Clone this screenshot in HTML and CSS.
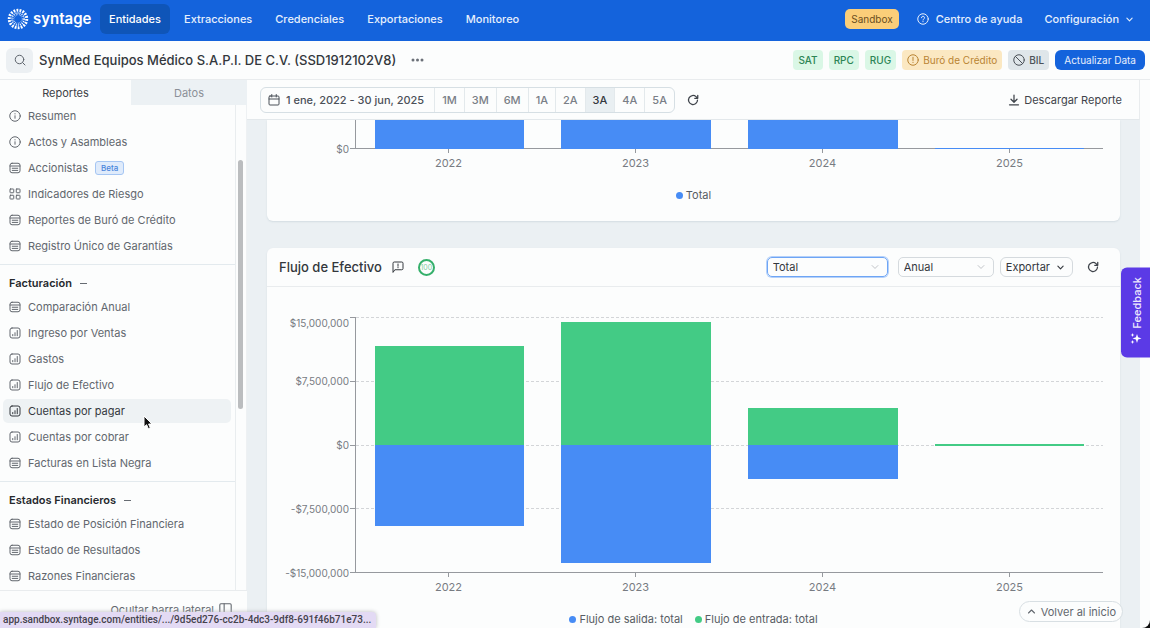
FILE: index.html
```html
<!DOCTYPE html>
<html lang="es">
<head>
<meta charset="utf-8">
<meta name="viewport" content="width=device-width, initial-scale=1">
<title>Syntage</title>
<link rel="stylesheet" href="styles.css">
</head>
<body>
<svg class="sprite" aria-hidden="true">
  <symbol id="i-info" viewBox="0 0 24 24"><circle cx="12" cy="12" r="10.5"/><path d="M12 11.5v5M12 7.3v.6"/></symbol>
  <symbol id="i-table" viewBox="0 0 24 24"><rect x="2" y="2.500" width="20" height="19" rx="4"/><path d="M2 8h20M6.500 12.500h11M6.500 16.800h11"/></symbol>
  <symbol id="i-grid" viewBox="0 0 24 24"><rect x="2" y="2" width="7.500" height="7.500" rx="1"/><rect x="14.500" y="2" width="7.500" height="7.500" rx="1"/><rect x="2" y="14.500" width="7.500" height="7.500" rx="1"/><rect x="14.500" y="14.500" width="7.500" height="7.500" rx="1"/></symbol>
  <symbol id="i-chart" viewBox="0 0 24 24"><rect x="2" y="2" width="20" height="20" rx="4"/><path d="M7.500 17.500v-2.500M12 17.500v-6M16.500 17.500V7"/></symbol>
  <symbol id="i-refresh" viewBox="0 0 24 24"><path d="M21 12a9 9 0 1 1-3-6.700L21 8M21.500 2.500V8.500H15.500"/></symbol>
  <symbol id="i-down" viewBox="0 0 24 24"><path d="M5 8.500l7 7 7-7"/></symbol>
</svg>

<header class="topbar">
  <a class="brand" href="#">
    <svg class="brand-mark" viewBox="0 0 44 44" aria-hidden="true">
      <circle class="rays-out" cx="22" cy="22" r="17.500" pathLength="180"/>
      <circle class="rays-mid" cx="22" cy="22" r="12.200" pathLength="180"/>
      <circle class="rays-in" cx="22" cy="22" r="8.800" pathLength="180"/>
    </svg>
    <span>syntage</span>
  </a>
  <nav class="mainnav">
    <a class="is-active" href="#">Entidades</a>
    <a href="#">Extracciones</a>
    <a href="#">Credenciales</a>
    <a href="#">Exportaciones</a>
    <a href="#">Monitoreo</a>
  </nav>
  <span class="env">Sandbox</span>
  <a class="help" href="#"><svg class="icon" viewBox="0 0 24 24"><circle cx="12" cy="12" r="10.500"/><path d="M9 9.500a3 3 0 1 1 4.300 2.700c-.9.500-1.300 1-1.300 1.900M12 17v.5"/></svg>Centro de ayuda</a>
  <button class="config" type="button">Configuración<svg class="icon tiny"><use href="#i-down"/></svg></button>
</header>

<section class="entity">
  <button class="search" type="button" aria-label="Buscar"><svg class="icon" viewBox="0 0 24 24"><circle cx="11" cy="11" r="8.500"/><path d="M17.300 17.300L22 22"/></svg></button>
  <h1>SynMed Equipos Médico S.A.P.I. DE C.V. (SSD1912102V8)</h1>
  <button class="more" type="button" aria-label="Más"><svg viewBox="0 0 13 4"><circle cx="2" cy="2" r="1.500"/><circle cx="6.500" cy="2" r="1.500"/><circle cx="11" cy="2" r="1.500"/></svg></button>
  <div class="status">
    <span class="tag ok">SAT</span>
    <span class="tag ok">RPC</span>
    <span class="tag ok">RUG</span>
    <span class="tag warn"><svg class="icon" viewBox="0 0 24 24"><circle cx="12" cy="12" r="10.500"/><path d="M12 6.500v6.500M12 16.500v.6"/></svg>Buró de Crédito</span>
    <span class="tag off"><svg class="icon" viewBox="0 0 24 24"><circle cx="12" cy="12" r="10.500"/><path d="M4.800 4.800l14.400 14.400"/></svg>BIL</span>
    <button class="update" type="button">Actualizar Data</button>
  </div>
</section>

<div class="layout">
  <aside class="sidebar">
    <div class="tabs">
      <button class="is-active" type="button">Reportes</button>
      <button type="button">Datos</button>
    </div>
    <div class="scroller">
      <nav class="menu">
        <section>
          <a href="#"><svg class="icon"><use href="#i-info"/></svg>Resumen</a>
          <a href="#"><svg class="icon"><use href="#i-info"/></svg>Actos y Asambleas</a>
          <a href="#"><svg class="icon"><use href="#i-table"/></svg>Accionistas <span class="beta">Beta</span></a>
          <a href="#"><svg class="icon"><use href="#i-grid"/></svg>Indicadores de Riesgo</a>
          <a href="#"><svg class="icon"><use href="#i-table"/></svg>Reportes de Buró de Crédito</a>
          <a href="#"><svg class="icon"><use href="#i-table"/></svg>Registro Único de Garantías</a>
        </section>
        <section>
          <h2>Facturación<i></i></h2>
          <a href="#"><svg class="icon"><use href="#i-table"/></svg>Comparación Anual</a>
          <a href="#"><svg class="icon"><use href="#i-chart"/></svg>Ingreso por Ventas</a>
          <a href="#"><svg class="icon"><use href="#i-chart"/></svg>Gastos</a>
          <a href="#"><svg class="icon"><use href="#i-chart"/></svg>Flujo de Efectivo</a>
          <a class="is-hover" href="#"><svg class="icon"><use href="#i-chart"/></svg>Cuentas por pagar</a>
          <a href="#"><svg class="icon"><use href="#i-chart"/></svg>Cuentas por cobrar</a>
          <a href="#"><svg class="icon"><use href="#i-table"/></svg>Facturas en Lista Negra</a>
        </section>
        <section>
          <h2>Estados Financieros<i></i></h2>
          <a href="#"><svg class="icon"><use href="#i-table"/></svg>Estado de Posición Financiera</a>
          <a href="#"><svg class="icon"><use href="#i-table"/></svg>Estado de Resultados</a>
          <a href="#"><svg class="icon"><use href="#i-table"/></svg>Razones Financieras</a>
        </section>
      </nav>
      <div class="track"><div class="thumb"></div></div>
    </div>
    <button class="collapse" type="button">Ocultar barra lateral<svg class="icon" viewBox="0 0 24 24"><rect x="1.500" y="1.500" width="21" height="21" rx="2"/><path d="M9.500 1.500v21"/></svg></button>
  </aside>

  <main class="main">
    <div class="toolbar">
      <div class="range">
        <button class="date" type="button"><svg class="icon" viewBox="0 0 24 24"><rect x="2" y="4" width="20" height="18" rx="2"/><path d="M2 10h20M7.500 1v5M16.500 1v5"/></svg>1 ene, 2022 - 30 jun, 2025</button>
        <button type="button">1M</button>
        <button type="button">3M</button>
        <button type="button">6M</button>
        <button type="button">1A</button>
        <button type="button">2A</button>
        <button class="is-active" type="button">3A</button>
        <button type="button">4A</button>
        <button type="button">5A</button>
      </div>
      <button class="plain" type="button" aria-label="Actualizar"><svg class="icon"><use href="#i-refresh"/></svg></button>
      <button class="plain download" type="button"><svg class="icon" viewBox="0 0 24 24"><path d="M12 2v14M6 10.500l6 6 6-6M3 21.500h18"/></svg>Descargar Reporte</button>
    </div>

    <div class="content">
      <article class="card card-cut">
        <div class="chart">
          <div class="y-labels"><span>$0</span></div>
          <div class="y-ticks"><i></i></div>
          <div class="plot">
            <div class="bars">
              <div class="col"><div class="up"><b class="out" style="height:100%"></b></div></div>
              <div class="col"><div class="up"><b class="out" style="height:100%"></b></div></div>
              <div class="col"><div class="up"><b class="out" style="height:100%"></b></div></div>
              <div class="col"><div class="up"><b class="out" style="height:3%"></b></div></div>
            </div>
          </div>
          <div class="x-labels"><span>2022</span><span>2023</span><span>2024</span><span>2025</span></div>
        </div>
        <div class="legend"><span class="key-out">Total</span></div>
      </article>

      <article class="card card-full">
        <header class="card-head">
          <h2>Flujo de Efectivo</h2>
          <svg class="icon note" viewBox="0 0 24 24"><path d="M2 22V4.500A2.500 2.500 0 0 1 4.500 2h15A2.500 2.500 0 0 1 22 4.500v10.500a2.500 2.500 0 0 1-2.500 2.500H6.500zM12 6v4.500M12 13v.6"/></svg>
          <span class="score">100</span>
          <div class="actions">
            <label class="select focus"><select aria-label="Tipo"><option>Total</option></select><svg class="icon"><use href="#i-down"/></svg></label>
            <label class="select short"><select aria-label="Periodo"><option>Anual</option></select><svg class="icon"><use href="#i-down"/></svg></label>
            <button class="export" type="button">Exportar<svg class="icon tiny"><use href="#i-down"/></svg></button>
            <button class="plain" type="button" aria-label="Actualizar"><svg class="icon"><use href="#i-refresh"/></svg></button>
          </div>
        </header>
        <div class="chart">
          <div class="y-labels"><span>$15,000,000</span><span>$7,500,000</span><span>$0</span><span>-$7,500,000</span><span>-$15,000,000</span></div>
          <div class="y-ticks"><i></i><i></i><i></i><i></i></div>
          <div class="plot">
            <div class="lines"><i></i><i></i><i></i><i></i></div>
            <div class="bars">
              <div class="col"><div class="up"><b class="in" style="height:77%"></b></div><div class="down"><b class="out" style="height:64%"></b></div></div>
              <div class="col"><div class="up"><b class="in" style="height:96%"></b></div><div class="down"><b class="out" style="height:93%"></b></div></div>
              <div class="col"><div class="up"><b class="in" style="height:29%"></b></div><div class="down"><b class="out" style="height:27%"></b></div></div>
              <div class="col"><div class="up"><b class="in" style="height:0%"></b></div><div class="down"><b class="in" style="height:0%"></b></div></div>
            </div>
          </div>
          <div class="x-labels"><span>2022</span><span>2023</span><span>2024</span><span>2025</span></div>
        </div>
        <div class="legend"><span class="key-out">Flujo de salida: total</span><span class="key-in">Flujo de entrada: total</span></div>
      </article>
    </div>
  </main>
</div>

<button class="feedback" type="button"><svg viewBox="0 0 24 24" aria-hidden="true"><path d="M10 3l2.200 6.800L19 12l-6.800 2.200L10 21l-2.200-6.800L1 12l6.800-2.200zM19 1l1.100 2.900L23 5l-2.900 1.100L19 9l-1.100-2.900L15 5l2.900-1.100zM19 15l1.100 2.900L23 19l-2.900 1.100L19 23l-1.100-2.900L15 19l2.900-1.100z"/></svg>Feedback</button>
<button class="to-top" type="button"><svg class="icon tiny" viewBox="0 0 24 24"><path d="M4 16l8-8 8 8"/></svg>Volver al inicio</button>
<div class="url">app.sandbox.syntage.com/entities/.../9d5ed276-cc2b-4dc3-9df8-691f46b71e73...</div>
<svg class="cursor" viewBox="0 0 10 15" aria-hidden="true"><path d="M1 1v11l2.600-2.300 1.700 4 2-.9-1.700-3.800H9z"/></svg>
</body>
</html>
```
FILE: styles.css
```css
* { box-sizing: border-box; }

html { background: #111; }

body {
  margin: 0;
  height: 100vh;
  display: flex;
  flex-direction: column;
  overflow: hidden;
  border-bottom-right-radius: 8px;
  background: #fcfdfd;
  color: #34383e;
  font: 400 11px/16px Inter, "Liberation Sans", sans-serif;
}

a { color: inherit; text-decoration: none; }

button, select {
  margin: 0;
  padding: 0;
  border: 0;
  background: none;
  color: inherit;
  font: inherit;
}

h1, h2 { margin: 0; }

.sprite { display: none; }

.icon {
  width: 12px;
  height: 12px;
  flex: none;
  fill: none;
  stroke: currentColor;
  stroke-width: 2;
  stroke-linecap: round;
  stroke-linejoin: round;
}

.icon.tiny { width: 9px; height: 9px; stroke-width: 3; }

/* Top bar */
.topbar {
  flex: none;
  height: 41px;
  padding: 0 16px 3px 7px;
  display: flex;
  align-items: center;
  background: #1463dc;
  color: #e6effc;
  font-weight: 500;
}

.brand {
  width: 93px;
  display: flex;
  align-items: center;
  gap: 4px;
  color: #fff;
  font: 600 15px/20px Inter, "Liberation Sans", sans-serif;
}

.brand-mark { width: 22px; height: 22px; flex: none; fill: none; stroke: #fff; }
.rays-out { stroke-width: 6; stroke-dasharray: 6 4; }
.rays-mid { stroke-width: 3; stroke-dasharray: 5 5; }
.rays-in { stroke-width: 3; stroke-dasharray: 3 7; }

.mainnav { display: flex; gap: 5px; flex: 1; }

.mainnav a {
  height: 30px;
  padding: 0 9px;
  border-radius: 6px;
  line-height: 30px;
}

.mainnav .is-active { background: #0f55b8; color: #fff; }

.env {
  padding: 2px 6px;
  border-radius: 5px;
  background: #fbce79;
  color: #6b4f22;
  font-weight: 400;
  font-size: 10px;
}

.help { display: flex; align-items: center; gap: 7px; margin: 0 22px 0 18px; }
.config { display: flex; align-items: center; gap: 6px; }

/* Entity bar */
.entity {
  flex: none;
  height: 39px;
  padding: 0 5px 0 6px;
  display: flex;
  align-items: center;
  border-bottom: 1px solid #e9ecee;
}

.search {
  width: 27px;
  height: 25px;
  display: grid;
  place-items: center;
  border-radius: 6px;
  background: #ecf0f3;
  color: #5d636b;
}

.entity h1 { margin: 0 15px 0 6px; font-size: 13px; font-weight: 500; color: #33373c; }
.more svg { width: 13px; height: 4px; fill: #6b7078; display: block; }
.status { margin-left: auto; display: flex; gap: 6px; }

.tag {
  height: 20px;
  padding: 0 5px;
  display: flex;
  align-items: center;
  gap: 4px;
  border-radius: 4px;
  font-size: 10px;
  font-weight: 500;
}

.ok { background: #daf7e6; color: #2d8555; }
.warn { background: #fbe8c2; color: #b98433; font-weight: 400; }
.off { background: #dfe6ea; color: #4b5158; }

.update {
  height: 20px;
  padding: 0 9px;
  border-radius: 6px;
  background: #1463dc;
  color: #e6effc;
  font-size: 10px;
  font-weight: 400;
}

/* Layout */
.layout { flex: 1; min-height: 0; display: flex; }

.sidebar { width: 247px; flex: none; display: flex; flex-direction: column; }
.tabs { flex: none; display: grid; grid-template-columns: 131px 1fr; }
.tabs button { height: 25px; background: #ecf1f4; color: #8b9097; }
.tabs .is-active { background: none; color: #3d4147; }

.scroller { flex: 1; min-height: 0; display: flex; overflow: hidden; }
.menu { flex: 1; margin-top: -2px; }
.menu section { padding-bottom: 4px; }
.menu section:first-child { padding-top: 1px; }
.menu section + section { padding-top: 6px; border-top: 1px solid #e3eaee; }

.menu h2 {
  height: 24px;
  padding-left: 9px;
  display: flex;
  align-items: center;
  gap: 8px;
  font-size: 11px;
  font-weight: 600;
  color: #26292d;
}

.menu h2 i { width: 7px; height: 1px; background: #666b72; }

.menu a {
  height: 24px;
  margin: 0 4px 2px 3px;
  padding-left: 6px;
  display: flex;
  align-items: center;
  gap: 7px;
  border-radius: 5px;
  color: #62676e;
}

.menu .is-hover { background: #eef2f4; color: #34383e; }

.beta {
  padding: 0 5px;
  border: 1px solid #a5c6f3;
  border-radius: 3px;
  background: #dfebfb;
  color: #4a86dc;
  font-size: 8px;
  font-weight: 500;
  line-height: 12px;
}

.track { width: 12px; padding: 55px 3px 0 2px; border-left: 1px solid #e9edef; border-right: 1px solid #eef1f3; }
.thumb { height: 249px; border-radius: 4px; background: #bbbdbf; }

.collapse {
  height: 38px;
  flex: none;
  padding-right: 15px;
  display: flex;
  align-items: center;
  justify-content: flex-end;
  gap: 5px;
  border-top: 1px solid #e9ecee;
  color: #62676e;
}

.collapse .icon { width: 13px; height: 13px; }

/* Main column */
.main {
  flex: 1;
  min-width: 0;
  margin-right: 10px;
  display: flex;
  flex-direction: column;
  background: #ebf0f3;
}

.toolbar {
  flex: none;
  height: 40px;
  padding: 0 17px 0 13px;
  display: flex;
  align-items: center;
  gap: 12px;
  background: #fcfdfd;
  border-right: 1px solid #e9ecee;
  border-bottom: 1px solid #e3e8eb;
}

.range {
  height: 26px;
  display: flex;
  overflow: hidden;
  border: 1px solid #d6dfe4;
  border-radius: 6px;
}

.range button { padding: 0 7px; border-left: 1px solid #e3e9ec; font-weight: 500; color: #7a7f87; }
.range .date { display: flex; align-items: center; gap: 6px; border: 0; padding: 0 10px 0 7px; color: #4b5058; }
.range .is-active { background: #e9eff2; color: #34383e; }

.plain { display: flex; align-items: center; gap: 4px; color: #3f444b; }
.plain .icon { stroke-width: 2.5; }
.download { margin-left: auto; }

.content {
  flex: 1;
  min-height: 0;
  padding: 0 20px;
  display: flex;
  flex-direction: column;
  gap: 27px;
  overflow: hidden;
}

.card { flex: none; border-radius: 6px; background: #fcfdfd; box-shadow: 0 1px 2px #d3dce1; }
.card-cut { height: 101px; border-top-left-radius: 0; border-top-right-radius: 0; }

.card-head {
  height: 39px;
  padding: 0 21px 0 12px;
  display: flex;
  align-items: center;
  border-bottom: 1px solid #e9ecee;
}

.card-head h2 { font-size: 13px; font-weight: 500; color: #33373c; }
.note { margin-left: 10px; }

.score {
  width: 17px;
  height: 17px;
  margin-left: 14px;
  border: 2px solid #35b06b;
  border-radius: 50%;
  color: #7fcfa2;
  font-size: 7px;
  line-height: 13px;
  text-align: center;
}

.actions { margin-left: auto; display: flex; align-items: center; }

.select { display: grid; width: 121px; height: 20px; margin-right: 10px; }
.select select {
  grid-area: 1 / 1;
  appearance: none;
  padding: 0 5px;
  border: 1px solid #d5dade;
  border-radius: 5px;
}
.select .icon {
  grid-area: 1 / 1;
  place-self: center end;
  margin-right: 8px;
  width: 10px;
  height: 10px;
  color: #b4b8bd;
  pointer-events: none;
}
.select.focus select { border-color: #6ea5f5; box-shadow: 0 0 0 1px #b5d1fa; }
.select.short { width: 96px; margin-right: 6px; }

.export {
  height: 20px;
  margin-right: 14px;
  padding: 0 7px 0 5px;
  display: flex;
  align-items: center;
  gap: 6px;
  border: 1px solid #d5dade;
  border-radius: 6px;
}

/* Charts */
.chart {
  padding-right: 17px;
  display: grid;
  grid-template-columns: 83px 5px 1fr;
  grid-template-rows: 256px 32px;
  color: #777b82;
}

.card-full .chart { padding-top: 30px; }
.card-cut .chart { grid-template-rows: 29px 32px; }

.y-labels { grid-row: 1 / 3; padding-right: 1px; text-align: right; font-size: 10px; }
.y-labels span { display: block; height: 64px; line-height: 64px; }
.y-labels span:first-child { height: 12px; margin-bottom: 20px; line-height: 12px; }
.card-cut .y-labels span:first-child { height: 58px; margin: 0; line-height: 58px; }

.y-ticks { display: grid; border-bottom: 1px solid #96999e; }
.card-full .y-ticks i { border-top: 1px solid #96999e; }

.plot { display: grid; border-left: 1px solid #96999e; border-bottom: 1px solid #96999e; }
.lines, .bars { grid-area: 1 / 1; display: grid; }
.lines i {
  background: repeating-linear-gradient(90deg, #d3d5d8 0 3px, transparent 3px 5px) top / 100% 1px no-repeat;
}

.bars { grid-template-columns: repeat(4, 1fr); }
.card-cut .bars { margin-bottom: -1px; }
.col { display: grid; grid-auto-rows: 1fr; }
.up, .down { display: flex; justify-content: center; align-items: flex-end; }
.down { align-items: flex-start; }
.bars b { width: 80%; min-height: 1px; }
.in { background: #43cb85; }
.out { background: #478cf5; }

.x-labels { grid-column: 3; display: grid; grid-template-columns: repeat(4, 1fr); text-align: center; }
.x-labels span::before {
  content: "";
  display: block;
  width: 1px;
  height: 4px;
  margin: 0 auto 2px;
  background: #96999e;
}

.legend { height: 28px; display: flex; justify-content: center; align-items: center; gap: 12px; color: #575c63; }
.legend span { display: flex; align-items: center; gap: 3px; }
.legend span::before { content: ""; width: 7px; height: 7px; border-radius: 50%; background: #478cf5; }
.legend .key-in::before { background: #43cb85; }

/* Overlays */
.feedback {
  position: absolute;
  right: 0;
  top: 267px;
  width: 29px;
  padding: 13px 2px 10px 0;
  display: flex;
  flex-direction: row;
  align-items: center;
  justify-content: center;
  gap: 4px;
  writing-mode: vertical-rl;
  rotate: 180deg;
  border-radius: 0 6px 6px 0;
  background: #5b3ae6;
  color: #ece8fd;
  font-weight: 500;
}

.feedback svg { width: 12px; height: 12px; fill: #fff; }

.to-top {
  position: absolute;
  right: 27px;
  bottom: 6px;
  height: 21px;
  padding: 0 6px 0 7px;
  display: flex;
  align-items: center;
  gap: 5px;
  border: 1px solid #d8dfe3;
  border-radius: 11px;
  background: #fcfdfd;
  color: #62676e;
}

.url {
  position: absolute;
  left: 0;
  bottom: 0;
  height: 16px;
  padding: 0 5px 0 3px;
  border-top-right-radius: 4px;
  background: #e3daf4;
  box-shadow: 0 0 4px #b9b9bd;
  color: #45424d;
  font: 500 10px/16px Roboto, "Liberation Sans", sans-serif;
}

.cursor { position: absolute; left: 143px; top: 415px; width: 10px; height: 15px; fill: #111; stroke: #fff; stroke-width: 1; }
```
